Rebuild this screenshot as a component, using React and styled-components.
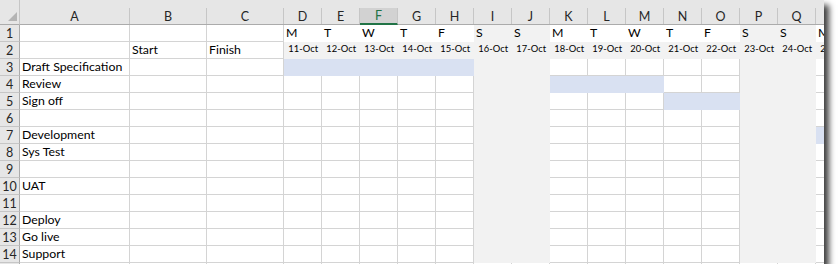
import React from 'react';
import styled, { createGlobalStyle, css } from 'styled-components';

const GlobalStyle = createGlobalStyle`
  html, body { margin: 0; padding: 0; background: #ffffff; }
  body { font-family: Lato, "Liberation Sans", sans-serif; color: #000; }
`;

const GRID = '#d4d4d4';
const HEADER_BG = '#e6e6e6';
const HEADER_LINE = '#c6c6c6';
const GRAY = '#f2f2f2';
const BLUE = '#d9e1f2';

const COLS = [
  { key: 'A', w: 110 },
  { key: 'B', w: 77 },
  { key: 'C', w: 77 },
  ...'DEFGHIJKLMNOPQR'.split('').map((k) => ({ key: k, w: 38 })),
];

const DAYS = ['M', 'T', 'W', 'T', 'F', 'S', 'S', 'M', 'T', 'W', 'T', 'F', 'S', 'S', 'M'];
const DATES = Array.from({ length: 15 }, (_, i) => `${11 + i}-Oct`);
const WEEKEND = new Set(['I', 'J', 'P', 'Q']);
const BLUE_CELLS = {
  3: ['D', 'E', 'F', 'G', 'H'],
  4: ['K', 'L', 'M'],
  5: ['N', 'O'],
  7: ['R'],
};
const TASKS = {
  3: 'Draft Specification',
  4: 'Review',
  5: 'Sign off',
  7: 'Development',
  8: 'Sys Test',
  10: 'UAT',
  12: 'Deploy',
  13: 'Go live',
  14: 'Support',
};

const Page = styled.div`
  padding: 0;
`;

const Frame = styled.div`
  width: 824px;
  height: 264px;
  overflow: hidden;
  background: #fff;
  box-shadow: 5px 5px 6px rgba(0, 0, 0, 0.75);
`;

const Sheet = styled.div`
  display: grid;
  grid-template-columns: 20px ${COLS.map((c) => `${c.w}px`).join(' ')};
  grid-template-rows: 25px repeat(15, 17px);
`;

const Corner = styled.div`
  box-sizing: border-box;
  background: ${HEADER_BG};
  border-right: 1px solid ${HEADER_LINE};
  border-bottom: 1px solid #ababab;
  display: flex;
  align-items: flex-end;
  justify-content: flex-end;
  padding: 0 2px 3px 0;
`;

const ColHeader = styled.div`
  box-sizing: border-box;
  background: ${HEADER_BG};
  border-bottom: 1px solid #ababab;
  padding-top: 8px;
  display: flex;
`;

const ColLabel = styled.div`
  box-sizing: border-box;
  flex: 1;
  display: flex;
  align-items: center;
  justify-content: center;
  border-right: 1px solid ${HEADER_LINE};
  font-size: 12.5px;
  color: #262626;
  ${(p) =>
    p.$selected &&
    css`
      background: #d2d2d2;
      color: #217346;
      border-bottom: 2px solid #217346;
      margin-bottom: -1px;
    `}
`;

const RowHeader = styled.div`
  box-sizing: border-box;
  background: ${HEADER_BG};
  border-right: 1px solid #ababab;
  border-bottom: 1px solid ${HEADER_LINE};
  display: flex;
  align-items: center;
  justify-content: center;
  font-size: 12.5px;
  color: #262626;
  padding-top: 1px;
`;

const fillColor = (fill) =>
  fill === 'blue' ? BLUE : fill === 'gray' ? GRAY : '#ffffff';

const Cell = styled.div`
  box-sizing: border-box;
  background: ${(p) => fillColor(p.$fill)};
  border-right: 1px solid ${(p) => (p.$fill ? fillColor(p.$fill) : GRID)};
  border-bottom: 1px solid ${(p) => (p.$fill ? fillColor(p.$fill) : GRID)};
  display: flex;
  align-items: flex-end;
  justify-content: ${(p) => (p.$align === 'right' ? 'flex-end' : 'flex-start')};
  padding: 0 ${(p) => (p.$align === 'right' ? '3px' : '2px')} ${(p) => (p.$small ? '2px' : '1px')} 2px;
  font-size: ${(p) => (p.$small ? '9.4px' : '12.3px')};
  line-height: 15px;
  white-space: nowrap;
  overflow: visible;
  min-width: 0;
`;

function SelectAll() {
  return (
    <svg width="9" height="9" viewBox="0 0 9 9">
      <polygon points="9,0 9,9 0,9" fill="#b4b4b4" />
    </svg>
  );
}

function cellFill(row, col) {
  if (row > 14) return null;
  if (col === 'A' || col === 'B' || col === 'C') return null;
  if (WEEKEND.has(col)) return 'gray';
  if (row === 1) return 'white';
  if (row === 2) return 'gray';
  if (BLUE_CELLS[row] && BLUE_CELLS[row].includes(col)) return 'blue';
  return null;
}

function cellContent(row, colIndex, col) {
  if (row === 1 && colIndex >= 3) return { text: DAYS[colIndex - 3] };
  if (row === 2) {
    if (col === 'B') return { text: 'Start' };
    if (col === 'C') return { text: 'Finish' };
    if (colIndex >= 3) return { text: DATES[colIndex - 3], align: 'right', small: true };
  }
  if (col === 'A' && TASKS[row]) return { text: TASKS[row] };
  return { text: '' };
}

export default function App() {
  const rows = Array.from({ length: 15 }, (_, i) => i + 1);
  return (
    <Page>
      <GlobalStyle />
      <Frame>
        <Sheet>
          <Corner>
            <SelectAll />
          </Corner>
          {COLS.map((c) => (
            <ColHeader key={c.key}>
              <ColLabel $selected={c.key === 'F'}>{c.key}</ColLabel>
            </ColHeader>
          ))}
          {rows.map((r) => (
            <React.Fragment key={r}>
              <RowHeader>{r}</RowHeader>
              {COLS.map((c, ci) => {
                const content = cellContent(r, ci, c.key);
                return (
                  <Cell
                    key={c.key}
                    $fill={cellFill(r, c.key)}
                    $align={content.align}
                    $small={content.small}
                  >
                    {content.text}
                  </Cell>
                );
              })}
            </React.Fragment>
          ))}
        </Sheet>
      </Frame>
    </Page>
  );
}
